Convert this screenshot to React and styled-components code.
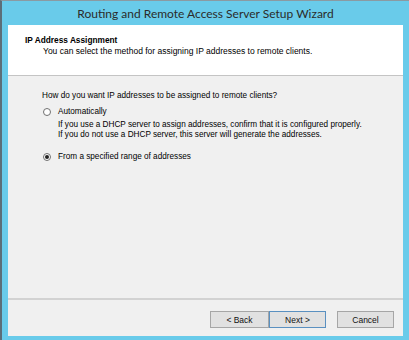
import React from 'react';
import styled, { createGlobalStyle } from 'styled-components';

const GlobalStyle = createGlobalStyle`
  html, body {
    margin: 0;
    padding: 0;
    background: #69cbea;
  }
`;

const Window = styled.div`
  width: 409px;
  height: 340px;
  box-sizing: border-box;
  background: #69cbea;
  border-top: 1px solid #8a9aa2;
  border-left: 2px solid #5c6e78;
  padding: 0 6px 4px 6px;
  display: flex;
  flex-direction: column;
  font-family: "Liberation Sans", Arial, sans-serif;
  color: #000;
`;

const TitleBar = styled.div`
  height: 24px;
  display: flex;
  align-items: center;
  justify-content: center;
  font-family: Lato, "Open Sans", sans-serif;
  font-size: 12px;
  color: #2b2b2b;
`;

const Client = styled.div`
  flex: 1;
  display: flex;
  flex-direction: column;
  background: #f0f0f0;
`;

const Header = styled.div`
  height: 51px;
  box-sizing: border-box;
  background: #fff;
  border-bottom: 1px solid #c4c4c4;
  padding: 10px 0 0 17px;
`;

const HeaderTitle = styled.div`
  font-size: 8.3px;
  font-weight: bold;
  line-height: 11px;
`;

const HeaderText = styled.div`
  font-size: 8.5px;
  line-height: 11px;
  padding-left: 18px;
`;

const Body = styled.div`
  flex: 1;
  padding: 14px 0 0 34px;
  font-size: 8.2px;
`;

const Question = styled.div`
  line-height: 11px;
  margin-bottom: 5px;
`;

const Option = styled.label`
  display: flex;
  align-items: center;
  gap: 7px;
  line-height: 11px;
  margin-bottom: ${(p) => p.$gap || 0}px;
`;

const Radio = styled.span`
  width: 8px;
  height: 8px;
  margin-left: 1px;
  box-sizing: border-box;
  border-radius: 50%;
  border: 1px solid #707070;
  background: #fff;
  display: flex;
  align-items: center;
  justify-content: center;
  &::after {
    content: '';
    display: ${(p) => (p.$checked ? 'block' : 'none')};
    width: 4px;
    height: 4px;
    border-radius: 50%;
    background: #222;
  }
`;

const Note = styled.div`
  padding-left: 16px;
  line-height: 10px;
  margin-bottom: 11px;
`;

const Footer = styled.div`
  height: 38px;
  box-sizing: border-box;
  border-top: 2px solid #d2d2d2;
  display: flex;
  justify-content: flex-end;
  align-items: flex-start;
  padding: 11px 9px 0 0;
`;

const Button = styled.button`
  width: ${(p) => p.$w || 59}px;
  height: 17px;
  box-sizing: border-box;
  margin-left: ${(p) => p.$ml || 0}px;
  background: #e1e1e1;
  border: 1px solid ${(p) => (p.$default ? '#5a90c0' : '#a6a6a6')};
  font-family: "Liberation Sans", Arial, sans-serif;
  font-size: 8.5px;
  color: #111;
  padding: 0;
`;

export default function App() {
  return (
    <>
      <GlobalStyle />
      <Window>
        <TitleBar>Routing and Remote Access Server Setup Wizard</TitleBar>
        <Client>
          <Header>
            <HeaderTitle>IP Address Assignment</HeaderTitle>
            <HeaderText>You can select the method for assigning IP addresses to remote clients.</HeaderText>
          </Header>
          <Body>
            <Question>How do you want IP addresses to be assigned to remote clients?</Question>
            <Option $gap={3}>
              <Radio />
              Automatically
            </Option>
            <Note>
              If you use a DHCP server to assign addresses, confirm that it is configured properly.
              <br />
              If you do not use a DHCP server, this server will generate the addresses.
            </Note>
            <Option>
              <Radio $checked />
              From a specified range of addresses
            </Option>
          </Body>
          <Footer>
            <Button>&lt; Back</Button>
            <Button $default $w={57}>Next &gt;</Button>
            <Button $w={57} $ml={11}>Cancel</Button>
          </Footer>
        </Client>
      </Window>
    </>
  );
}
